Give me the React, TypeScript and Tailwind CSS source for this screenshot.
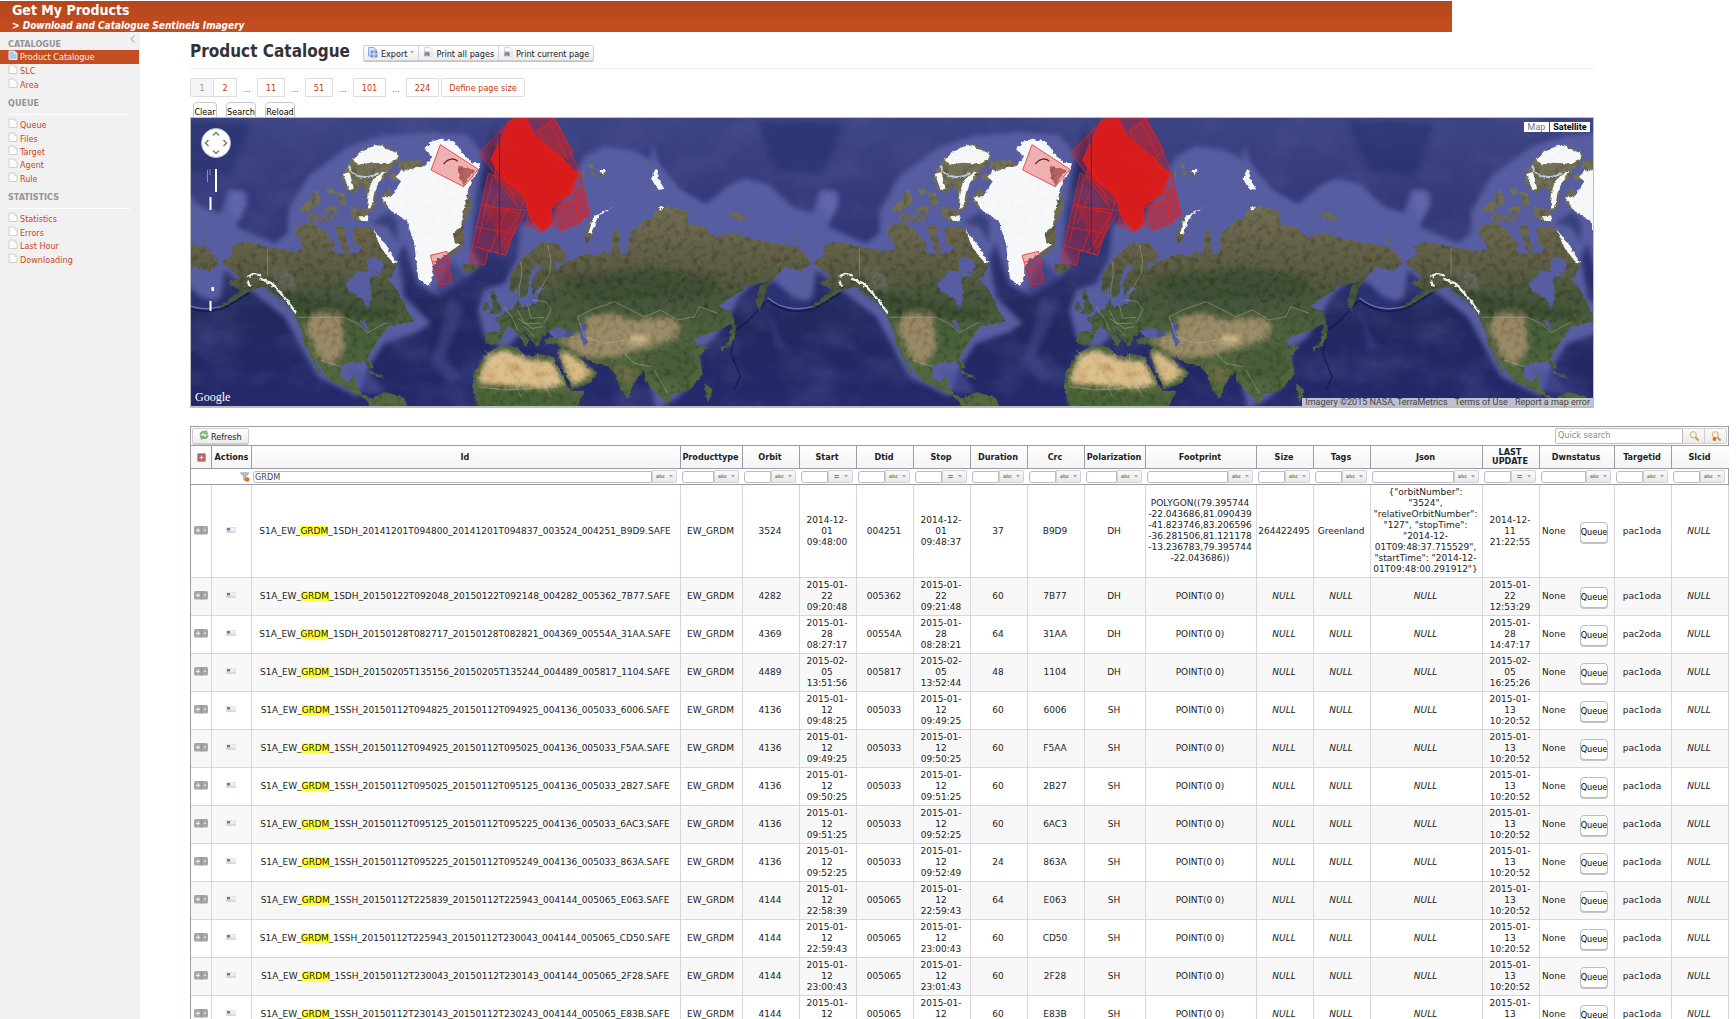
import type { ReactNode } from "react";

/* ---------- small icons ---------- */

function PageIcon({ active = false }: { active?: boolean }) {
  return (
    <svg viewBox="0 0 10 10" className="size-[10px] shrink-0" aria-hidden="true">
      <path
        d="M1 1h5.500L9 3.500V9.500H1z"
        fill={active ? "#a9c8f2" : "#fbfbfb"}
        stroke={active ? "#e4eefb" : "#cfcfcf"}
        strokeWidth="1"
      />
      <path d="M6.500 1v2.500H9" fill="none" stroke={active ? "#ffffff" : "#d8d8d8"} strokeWidth=".8" />
    </svg>
  );
}

function ExportIcon() {
  return (
    <svg viewBox="0 0 10 11" className="h-[11px] w-[10px]" aria-hidden="true">
      <path d="M.5.5h5.500L8 2.500V9H.5z" fill="#d6e4f8" stroke="#8fa9d6" />
      <path d="M3 4h6v6H3z" fill="#7d9fdd" stroke="#5f82c4" strokeWidth=".7" />
      <path d="M3 7h6M6 4v6" stroke="#e9f1fc" strokeWidth=".9" />
    </svg>
  );
}

function PrintIcon() {
  return (
    <svg viewBox="0 0 10 11" className="h-[11px] w-[10px]" aria-hidden="true">
      <path d="M1.500.5H7L9 2.500V9.500H1.500z" fill="#f7f7f7" stroke="#cfd3d8" strokeWidth=".8" />
      <rect x="1" y="4.500" width="6" height="4.500" fill="#aab3c0" />
      <path d="M2 8.500 3.500 5.500 5 8.500M5.500 5.500v3" stroke="#5d6878" strokeWidth=".8" fill="none" />
    </svg>
  );
}

function RefreshIcon() {
  return (
    <svg viewBox="0 0 10 10" className="size-[10px]" aria-hidden="true">
      <path d="M.8 4.300C1.400 1.600 4 .6 6.200 1.600L7.400.4 8.800 4.200 4.800 3.900 5.600 2.900C4.200 2.400 3 3 2.700 4.300z" fill="#8cc47f" stroke="#4c8f45" strokeWidth=".5" />
      <path d="M9.200 5.700C8.600 8.400 6 9.400 3.800 8.400L2.600 9.600 1.200 5.800 5.200 6.100 4.400 7.100C5.800 7.600 7 7 7.300 5.700z" fill="#7dbb72" stroke="#4c8f45" strokeWidth=".5" />
    </svg>
  );
}

function AddIcon() {
  return (
    <svg viewBox="0 0 9 9" className="mx-auto size-[9px]" aria-hidden="true">
      <rect x=".5" y=".5" width="8" height="8" rx="1" fill="#b0626a" stroke="#c9999d" />
      <path d="M4.500 2.500v4M2.500 4.500h4" stroke="#f0dcdd" strokeWidth="1.200" />
    </svg>
  );
}

function RowToggleIcon() {
  return (
    <svg viewBox="0 0 14 9" className="mx-auto h-[9px] w-[14px]" aria-hidden="true">
      <rect width="14" height="8.500" rx="1.500" fill="#a6a6a6" />
      <path d="M7.500 0v8.500" stroke="#8b8b8b" strokeWidth=".8" />
      <path d="M4 2.300v4M2 4.300h4" stroke="#e4eaed" strokeWidth="1.200" />
      <path d="M10 4.300h2" stroke="#e0e0e0" strokeWidth="1.400" />
    </svg>
  );
}

function CardIcon() {
  return (
    <svg viewBox="0 0 10 6" className="mx-auto h-[6px] w-[10px]" aria-hidden="true">
      <rect width="10" height="6" fill="#e2e4e8" />
      <rect x="1" y="1" width="3" height="2.500" fill="#6c7c9b" />
      <path d="M5 1.500h4M5 3h4" stroke="#f8f8fb" strokeWidth=".8" />
      <path d="M.5 5h9" stroke="#c5c8cf" strokeWidth=".8" />
    </svg>
  );
}

function FunnelIcon() {
  return (
    <svg viewBox="0 0 10 10" className="h-[10px] w-[10px]" aria-hidden="true">
      <path d="M.5.8h8.500L6 4.500V9L3.700 8V4.500z" fill="#bdbdbd" stroke="#8b8b8b" strokeWidth=".6" />
      <circle cx="7.300" cy="7.500" r="1.900" fill="#e2702f" stroke="#b54f1c" strokeWidth=".4" />
    </svg>
  );
}

function LensIcon({ reset = false }: { reset?: boolean }) {
  return (
    <svg viewBox="0 0 10 10" className="size-[10px]" aria-hidden="true">
      <path d="M6 6 9 9" stroke="#c99a4a" strokeWidth="1.800" strokeLinecap="round" />
      <circle cx="4.300" cy="3.800" r="3" fill="#f4f4f0" stroke="#d9b576" strokeWidth="1.100" />
      {reset && <circle cx="3.500" cy="8" r="1.900" fill="#dd6427" />}
    </svg>
  );
}

function Caret() {
  return (
    <svg viewBox="0 0 4 3" className="h-[3px] w-[4px]" aria-hidden="true">
      <path d="M0 0h4L2 2.500z" fill="#a5a5a5" />
    </svg>
  );
}

/* ---------- satellite map ---------- */

const PERIOD = 1775;
const COPIES = [-1, 0, 1, 2, 3];

const land = [
  "M130 472 108 458 150 432 138 412 178 392 250 410 330 424 400 402 470 432 522 428 540 400 562 440 520 482 485 520 490 540 536 566 550 602 562 560 556 500 600 498 640 540 668 600 690 635 655 640 610 650 582 690 562 722 550 745 568 774 556 778 540 756 500 756 470 770 468 800 490 816 512 794 514 825 530 850 562 866 600 846 660 862 672 900 560 900 548 870 500 842 430 806 396 750 368 700 342 642 330 612 290 562 240 530 190 545 130 585 90 600 128 572 170 540 130 520 165 500z",
  "M975 545 980 492 1005 455 1035 425 1072 396 1120 402 1150 440 1138 462 1110 452 1118 475 1140 460 1160 448 1210 430 1240 440 1255 425 1282 430 1286 372 1302 356 1308 430 1330 430 1335 372 1380 330 1400 330 1410 305 1450 288 1505 300 1512 342 1560 352 1600 384 1640 366 1700 385 1760 398 1845 412 1880 462 1850 482 1800 472 1760 512 1740 560 1725 604 1715 580 1725 530 1752 512 1690 530 1625 572 1605 592 1640 602 1645 640 1615 655 1590 665 1535 684 1535 702 1570 712 1545 742 1555 792 1515 840 1465 850 1452 880 1410 846 1385 812 1378 780 1345 826 1332 866 1310 840 1290 790 1270 768 1240 764 1200 740 1175 742 1110 700 1085 704 1080 690 1130 672 1095 665 1075 680 1060 710 1040 690 1020 662 1005 650 1035 690 1025 712 1000 672 980 652 960 660 948 695 925 706 903 700 905 665 945 665 950 645 930 630 970 605 990 592 1000 566 1012 592 1062 578 1060 548 1085 535 1062 530 1045 560 1042 520 1055 490 1072 470 1055 462 1035 500 1030 545 1020 562 1002 560 1000 530 988 545z",
  "M950 706 1000 712 1018 735 1045 742 1060 730 1110 742 1130 790 1162 842 1200 842 1172 900 886 900 864 836 868 790 900 735z",
  "M1120 722 1140 710 1180 735 1210 768 1242 790 1215 820 1164 838 1145 800z",
  "M330 352 372 338 410 352 450 400 442 428 380 434 350 400z",
  "M340 300 372 272 405 256 410 276 366 310z",
  "M425 236 445 230 450 250 432 256z M452 244 482 252 486 290 468 285z M420 292 460 288 455 312 424 306z M372 315 400 312 396 336 366 330z M402 320 450 314 446 330 404 332z M384 246 400 240 402 256 380 262z",
  "M478 182 500 150 540 118 590 102 642 128 644 148 618 178 596 214 578 220 568 300 546 302 550 250 530 226 510 250 488 238 472 212z",
  "M506 352 560 350 602 402 640 462 622 502 588 492 600 460 552 430 540 410 510 402z",
  "M452 350 480 345 488 400 500 450 476 420 462 380z M518 448 548 455 552 485 522 482z M560 480 620 498 610 505z M496 290 548 300 552 330 520 334 500 318z",
  "M645 152 700 150 724 170 690 182 640 176z M620 190 650 194 642 212 616 208z M592 262 612 232 622 250 640 298 604 292z M836 300 858 240 860 300 840 330 836 404 806 400 804 370z",
  "M918 545 932 540 935 565 952 596 945 610 914 612 925 590z M898 580 912 572 914 596 896 602z",
  "M834 462 868 460 882 474 854 492 838 482z",
  "M1645 610 1655 660 1650 680 1640 706 1612 722 1608 714 1635 695z M1540 784 1548 786 1545 812z M1560 820 1585 840 1570 880z",
  "M1205 400 1200 375 1225 320 1240 318 1215 400z M1626 312 1660 310 1690 326 1660 332z M1185 190 1200 186 1200 205 1184 204z M1210 166 1224 160 1228 176z M1236 192 1254 188 1250 204z M1216 186 1228 182 1230 200z",
  "M580 792 602 804 570 800z M550 782 588 795 560 792z",
  "M350 680 362 682 410 790 400 785z M1832 386 1850 388 1842 396z",
];

const ice = [
  "M652 182 722 168 744 140 720 118 738 96 770 86 812 96 835 130 862 158 888 160 880 185 862 206 852 240 840 290 830 350 806 372 812 400 834 408 800 428 760 448 745 470 744 502 732 528 702 506 690 402 668 332 620 302 592 262 620 262 650 214 634 200z",
  "M506 150 536 120 580 104 638 130 640 146 612 162 560 158 520 164z",
  "M476 192 496 186 508 236 494 240z M580 196 604 182 570 246 562 294 548 296 556 230 566 210z M522 320 552 316 550 334 530 332z",
  "M566 358 600 398 638 460 622 454 590 414z",
  "M1410 182 1420 180 1424 210 1440 236 1420 240 1402 208z M1285 290 1245 318 1222 372 1212 372 1226 322z M1245 180 1268 180 1256 192z M1422 292 1440 290 1430 304z",
];

const borders =
  "M250 414V500M340 622H480L520 640 550 668 610 636M1008 455C1020 500 1000 520 1005 560M1090 405 1100 450 1096 490 1060 552M1045 570 1085 575 1100 600 1080 640M1000 600 1020 640 1070 640M1180 620 1220 600 1290 575 1340 600 1380 620 1430 600 1480 630 1530 620 1545 590 1600 610M1180 620 1200 680 1260 700 1320 690M1300 710 1350 760 1400 770M900 720 980 800 1010 860M1060 735 1065 800 1100 860M880 830 960 840 1120 830M1020 650 1050 680M960 590 985 625 1000 660M1030 585 1040 625 1080 622M1000 625 1045 655 1075 650M1410 780 1450 850M410 750 470 770";

function Footprints() {
  return (
    <g stroke="#e8231d" strokeWidth="3" fill="#e01b18" fillOpacity=".32" strokeOpacity=".75">
      <path d="M768 104 882 178 838 230 740 180z" />
      <path d="M738 436 788 424 802 518 764 526z M744 456 794 452M754 484 798 478" />
      <path d="M912 190 1030 240 965 436 912 420 902 466 854 454z" />
      <path d="M894 282 1005 312M872 350 985 370M864 408 962 434M940 250 905 340M970 290 915 430M1000 320 935 430M925 200 880 400" fill="none" />
      <path d="M885 128 985 24H1065L1110 24 1160 128 1188 190 1216 316 1125 362 1110 340 1076 365 1026 346 1032 300 930 190z" />
      <path d="M1060 60 1110 24 1166 128 1100 160zM1120 290 1180 270 1190 340 1128 360zM1170 244 1194 238 1216 316 1180 330z" />
      <path d="M1030 90 1098 40 1150 150M1100 180 1190 190M1080 300 1180 270M1100 230 1190 240" fill="none" />
      <path d="M975 32 1025 24 1056 80 1130 140 1180 192 1160 250 1100 290 1104 340 1076 362 1040 330 1020 262 950 200 920 150z" fillOpacity=".93" />
      <path d="M940 150 1000 290 930 200zM900 290 1030 300 960 420" />
    </g>
  );
}

function SeaFloor() {
  return (
    <>
      <g filter="url(#soft)">
        <path
          fill="#565da1"
          d="M-370 100-350 170-290 240-210 282-140 225-90 205-20 225 50 290 110 310 130 240 175 240 190 280 155 350 270 400 310 370 312 300 370 200 490 110 590 78 730 66 850 74 895 130 870 300 862 420 890 460 850 500 760 560 700 520 660 400 640 440 660 560 740 640 700 665 600 700 560 760 520 860 400 800 300 620 120 480 110 560 60 590 0 520-50 505-110 560-130 600-180 680-230 720-230 780-290 860-360 900-420 600z"
        />
        <path
          fill="#565da1"
          d="M1010 340 1100 330 1200 140 1260 108 1350 122 1420 160 1480 240 1600 320 1640 500 1500 500 1100 560 1060 620 960 720 900 680 880 600 900 540 960 520 1000 440z"
        />
        <path fill="#656bad" fillOpacity=".6" d="M140 240 190 250 180 300 160 335 138 300z" />
        <path fill="#2b3070" d="M650 380 690 560 790 560 850 500 800 450 740 560 700 520z" fillOpacity=".5" />
        <path fill="#262b66" d="M640 330 612 305 560 340 610 350 640 400z" fillOpacity=".6" />
        <path fill="#4a5095" d="M800 560 840 600 780 740 830 800 800 820 740 760z" fillOpacity=".45" />
        <path fill="#20245c" d="M930 40 900 180 880 260 940 180z" fillOpacity=".7" />
        <path fill="#262b66" d="M-60 30 0 180 140 200 200 40z" fillOpacity=".5" />
        <path fill="#2b3074" d="M-50 510 0 515 50 560 100 575 90 600 30 605-20 590z" />
        <path fill="#3a418c" d="M-30 580 10 680 30 710 100 720 0 715z" fillOpacity=".6" />
        <path fill="#4c529a" d="M480 770 560 790 600 850 540 850z" fillOpacity=".6" />
      </g>
      <path d="M-25 570C10 600 60 612 110 596C140 585 170 560 195 548" fill="none" stroke="#10173f" strokeWidth="7" strokeOpacity=".7" />
      <path d="M-25 563C10 593 60 605 110 589C140 578 170 553 195 541" fill="none" stroke="#6a70aa" strokeWidth="4" />
      <path d="M-27 572-85 634-125 664-135 730-107 800-125 840" fill="none" stroke="#11163f" strokeWidth="5" strokeOpacity=".6" />
    </>
  );
}

function LandMasses() {
  return (
    <>
      <g filter="url(#coast)">
        {land.map((d) => (
          <path key={d} d={d} fill="url(#land)" />
        ))}
        <g filter="url(#soft)">
          <path fill="#a18e6b" fillOpacity=".9" d="M360 645 400 600 470 600 480 720 440 770 400 740z" />
          <path fill="#436239" fillOpacity=".7" d="M490 650 590 645 540 735 490 745z" />
          <path fill="#a3926f" d="M1120 690 1210 660 1200 620 1290 610 1340 630 1440 620 1490 640 1480 680 1400 710 1290 740 1200 740z" fillOpacity=".9" />
          <path fill="#4b5b38" d="M1400 740 1520 700 1540 770 1500 820 1400 800z" fillOpacity=".8" />
          <path fill="#77714a" d="M1285 765 1360 775 1335 835z" fillOpacity=".7" />
          <path fill="#34452d" d="M1120 500 1400 470 1600 500 1580 560 1200 570z" fillOpacity=".5" />
          <path fill="#34432c" d="M230 530 420 570 640 600 600 630 350 612z" fillOpacity=".5" />
          <path fill="#6c6c60" d="M260 470 320 480 340 530 300 540z" fillOpacity=".8" />
          <path fill="#dcc08e" d="M885 795 910 738 960 720 1040 750 1105 755 1140 825 1080 835 885 820z" />
          <path fill="#d9bb88" d="M1125 728 1150 726 1200 765 1225 790 1170 826 1150 795z" />
          <path fill="#b88c58" d="M960 770 1010 760 1000 790zM1040 790 1080 780 1070 810zM900 790 930 785 920 810z" fillOpacity=".7" />
          <path fill="#4a6339" d="M875 850 1140 846 1180 862 1165 895 885 895z" />
          <path fill="#d5c190" d="M1320 696 1350 676 1400 680 1370 700z" />
        </g>
        <path fill="#565da1" d="M1090 668 1115 652 1135 656 1170 668 1165 680 1110 682zM1186 640 1208 642 1200 670 1212 698 1198 706 1186 670zM520 626 548 640 552 668 540 650z" />
        <path fill="#2b3170" d="M1112 752 1120 756 1162 830 1156 834z" />
        {ice.map((d) => (
          <path key={d} d={d} fill="#f6f8f9" />
        ))}
        <path d="M494 166C500 200 540 212 580 190" fill="none" stroke="#b9cfdc" strokeWidth="6" />
        <path d="M188 500 206 492 232 496M226 506 262 520 290 550 336 610M190 512 196 530" fill="none" stroke="#eef1f2" strokeWidth="7" />
      </g>
      <path d="M778 162C792 143 812 144 820 154" fill="none" stroke="#3a2433" strokeWidth="4" />
      <path d="M818 168 850 172 872 182 850 206 838 226 826 200z" fill="#6b3b34" fillOpacity=".6" filter="url(#coast)" />
      <path d="M790 430 830 402 834 410 796 445z" fill="#6d5f52" />
      <path d={borders} fill="none" stroke="#c9cbb8" strokeWidth="2" strokeOpacity=".55" />
      <Footprints />
    </>
  );
}

function SatelliteMap() {
  return (
    <svg className="block h-[288px] w-full" role="img" aria-label="Satellite world map with product footprints">
      <defs>
        <linearGradient id="sea" x1="0" y1="0" x2="0" y2="1">
          <stop offset="0" stopColor="#3d4485" />
          <stop offset=".2" stopColor="#363c7d" />
          <stop offset=".45" stopColor="#2f3575" />
          <stop offset=".68" stopColor="#22285f" />
          <stop offset="1" stopColor="#23296a" />
        </linearGradient>
        <linearGradient id="land" gradientUnits="userSpaceOnUse" x1="0" y1="250" x2="0" y2="880">
          <stop offset="0" stopColor="#757158" />
          <stop offset=".3" stopColor="#625f47" />
          <stop offset=".5" stopColor="#48563b" />
          <stop offset=".7" stopColor="#50643f" />
          <stop offset="1" stopColor="#54683f" />
        </linearGradient>
        <filter id="soft" x="-10%" y="-10%" width="120%" height="120%">
          <feGaussianBlur stdDeviation="8" />
        </filter>
        <filter id="coast" x="-2%" y="-2%" width="104%" height="104%">
          <feTurbulence type="fractalNoise" baseFrequency=".09" numOctaves="3" seed="4" result="n" />
          <feDisplacementMap in="SourceGraphic" in2="n" scale="11" xChannelSelector="R" yChannelSelector="G" result="shape" />
          <feTurbulence type="fractalNoise" baseFrequency=".05" numOctaves="4" seed="9" result="m" />
          <feColorMatrix in="m" type="matrix" values="0 0 0 0 .12  0 0 0 0 .13  0 0 0 0 .06  1.600 0 0 0 -.72" result="dark" />
          <feComposite in="dark" in2="shape" operator="in" result="shade" />
          <feBlend in="shade" in2="shape" mode="soft-light" />
        </filter>
        <filter id="relief" x="0" y="0" width="100%" height="100%">
          <feTurbulence type="fractalNoise" baseFrequency=".02 .03" numOctaves="4" seed="3" />
          <feColorMatrix type="matrix" values="0 0 0 0 .08  0 0 0 0 .09  0 0 0 0 .28  1.600 0 0 0 -.68" />
        </filter>
        <g id="seafloor">
          <SeaFloor />
        </g>
        <g id="landmasses">
          <LandMasses />
        </g>
      </defs>
      <rect width="100%" height="100%" fill="url(#sea)" />
      <rect width="100%" height="100%" filter="url(#relief)" opacity=".6" />
      <g transform="scale(.33333) translate(-20 -24)">
        {COPIES.map((n) => (
          <use key={n} href="#seafloor" x={n * PERIOD} />
        ))}
        {COPIES.map((n) => (
          <use key={n} href="#landmasses" x={n * PERIOD} />
        ))}
        <path d="M946 70V430M2721 70V430" stroke="#3a2a66" strokeWidth="3" />
      </g>
      <g>
        <circle cx="25" cy="25" r="14.500" fill="#fff" stroke="#b9bdd0" />
        <path d="M22 17.500 25 14.500 28 17.500M22 32.500 25 35.500 28 32.500M17.500 22 14.500 25 17.500 28M32.500 22 35.500 25 32.500 28" fill="none" stroke="#7b7b7b" strokeWidth="1.500" />
        <path d="M24 51h2v23h-2zM18.500 79h2v13h-2zM20.500 169h2.500v4h-2.500zM18.500 183h2v10h-2z" fill="#fff" />
        <path d="M16.500 52v12M19 51v6" stroke="#fff" strokeOpacity=".45" />
      </g>
    </svg>
  );
}

/* ---------- data ---------- */

const NAV: { title: string; items: string[]; grid: string; rule: boolean }[] = [
  { title: "CATALOGUE", items: ["Product Catalogue", "SLC", "Area"], grid: "h-[41px]", rule: false },
  { title: "QUEUE", items: ["Queue", "Files", "Target", "Agent", "Rule"], grid: "h-[67px]", rule: true },
  { title: "STATISTICS", items: ["Statistics", "Errors", "Last Hour", "Downloading"], grid: "h-[54px]", rule: true },
];

const COLUMNS: [string, string, "abc" | "="][] = [
  ["Id", "w-[429px]", "abc"],
  ["Producttype", "w-[62px]", "abc"],
  ["Orbit", "w-[57px]", "abc"],
  ["Start", "w-[57px]", "="],
  ["Dtid", "w-[57px]", "abc"],
  ["Stop", "w-[57px]", "="],
  ["Duration", "w-[57px]", "abc"],
  ["Crc", "w-[57px]", "abc"],
  ["Polarization", "w-[61px]", "abc"],
  ["Footprint", "w-[111px]", "abc"],
  ["Size", "w-[57px]", "abc"],
  ["Tags", "w-[57px]", "abc"],
  ["Json", "w-[112px]", "abc"],
  ["LAST UPDATE", "w-[57px]", "="],
  ["Dwnstatus", "w-[75px]", "abc"],
  ["Targetid", "w-[57px]", "abc"],
  ["Slcid", "w-[57px]", "abc"],
];

type Row = {
  mode: string;
  day: string;
  from: string;
  to: string;
  orbit: string;
  dtid: string;
  crc: string;
  duration: string;
  updated: string;
  at: string;
  target?: string;
  footprint?: string[];
  size?: string;
  tags?: string;
  json?: string[];
};

const ROWS: Row[] = [
  {
    mode: "1SDH", day: "2014-12-01", from: "09:48:00", to: "09:48:37", orbit: "3524", dtid: "004251", crc: "B9D9", duration: "37",
    updated: "2014-12-11", at: "21:22:55", size: "264422495", tags: "Greenland",
    footprint: ["POLYGON((79.395744", "-22.043686,81.090439", "-41.823746,83.206596", "-36.281506,81.121178", "-13.236783,79.395744", "-22.043686))"],
    json: ['{"orbitNumber":', '"3524",', '"relativeOrbitNumber":', '"127", "stopTime":', '"2014-12-', '01T09:48:37.715529",', '"startTime": "2014-12-', '01T09:48:00.291912"}'],
  },
  { mode: "1SDH", day: "2015-01-22", from: "09:20:48", to: "09:21:48", orbit: "4282", dtid: "005362", crc: "7B77", duration: "60", updated: "2015-01-22", at: "12:53:29" },
  { mode: "1SDH", day: "2015-01-28", from: "08:27:17", to: "08:28:21", orbit: "4369", dtid: "00554A", crc: "31AA", duration: "64", updated: "2015-01-28", at: "14:47:17", target: "pac2oda" },
  { mode: "1SDH", day: "2015-02-05", from: "13:51:56", to: "13:52:44", orbit: "4489", dtid: "005817", crc: "1104", duration: "48", updated: "2015-02-05", at: "16:25:26" },
  { mode: "1SSH", day: "2015-01-12", from: "09:48:25", to: "09:49:25", orbit: "4136", dtid: "005033", crc: "6006", duration: "60", updated: "2015-01-13", at: "10:20:52" },
  { mode: "1SSH", day: "2015-01-12", from: "09:49:25", to: "09:50:25", orbit: "4136", dtid: "005033", crc: "F5AA", duration: "60", updated: "2015-01-13", at: "10:20:52" },
  { mode: "1SSH", day: "2015-01-12", from: "09:50:25", to: "09:51:25", orbit: "4136", dtid: "005033", crc: "2B27", duration: "60", updated: "2015-01-13", at: "10:20:52" },
  { mode: "1SSH", day: "2015-01-12", from: "09:51:25", to: "09:52:25", orbit: "4136", dtid: "005033", crc: "6AC3", duration: "60", updated: "2015-01-13", at: "10:20:52" },
  { mode: "1SSH", day: "2015-01-12", from: "09:52:25", to: "09:52:49", orbit: "4136", dtid: "005033", crc: "863A", duration: "24", updated: "2015-01-13", at: "10:20:52" },
  { mode: "1SSH", day: "2015-01-12", from: "22:58:39", to: "22:59:43", orbit: "4144", dtid: "005065", crc: "E063", duration: "64", updated: "2015-01-13", at: "10:20:52" },
  { mode: "1SSH", day: "2015-01-12", from: "22:59:43", to: "23:00:43", orbit: "4144", dtid: "005065", crc: "CD50", duration: "60", updated: "2015-01-13", at: "10:20:52" },
  { mode: "1SSH", day: "2015-01-12", from: "23:00:43", to: "23:01:43", orbit: "4144", dtid: "005065", crc: "2F28", duration: "60", updated: "2015-01-13", at: "10:20:52" },
  { mode: "1SSH", day: "2015-01-12", from: "23:01:43", to: "23:02:43", orbit: "4144", dtid: "005065", crc: "E83B", duration: "60", updated: "2015-01-13", at: "10:20:52" },
];

/* ---------- table pieces ---------- */

function Lines({ of }: { of: string[] }) {
  return (
    <>
      {of.map((line, i) => (
        <span key={i} className="block">
          {line}
        </span>
      ))}
    </>
  );
}

function Cell({ children }: { children: ReactNode }) {
  return <td className="border-r border-b border-[#d6d6dc] py-[2px] pr-[2px] pl-0 whitespace-nowrap">{children}</td>;
}

const Null = () => <i>NULL</i>;

const stamp = (day: string, time: string) => [day.slice(0, 8), day.slice(8), time];

function ProductRow({ row }: { row: Row }) {
  const compact = row.day.replaceAll("-", "");
  const t = (v: string) => `${compact}T${v.replaceAll(":", "")}`;
  return (
    <tr className="h-[38px] even:bg-[#f8f8f8]">
      <Cell>
        <button type="button" aria-label="Toggle row" className="block w-full pb-[2px] pl-[2px]">
          <RowToggleIcon />
        </button>
      </Cell>
      <Cell>
        <button type="button" aria-label="View record" className="block w-full pb-[3px]">
          <CardIcon />
        </button>
      </Cell>
      <Cell>
        S1A_EW_<mark className="bg-[#ffff33] text-inherit">GRDM</mark>
        {`_${row.mode}_${t(row.from)}_${t(row.to)}_00${row.orbit}_${row.dtid}_${row.crc}.SAFE`}
      </Cell>
      <Cell>EW_GRDM</Cell>
      <Cell>{row.orbit}</Cell>
      <Cell><Lines of={stamp(row.day, row.from)} /></Cell>
      <Cell>{row.dtid}</Cell>
      <Cell><Lines of={stamp(row.day, row.to)} /></Cell>
      <Cell>{row.duration}</Cell>
      <Cell>{row.crc}</Cell>
      <Cell>{row.mode.slice(2)}</Cell>
      <Cell>{row.footprint ? <Lines of={row.footprint} /> : "POINT(0 0)"}</Cell>
      <Cell>{row.size ?? <Null />}</Cell>
      <Cell>{row.tags ?? <Null />}</Cell>
      <Cell>{row.json ? <Lines of={row.json} /> : <Null />}</Cell>
      <Cell><Lines of={stamp(row.updated, row.at)} /></Cell>
      <Cell>
        <div className="flex items-center justify-between pr-[4px] pl-[2px]">
          None
          <button
            type="button"
            className="mt-[2px] h-[21px] w-[28px] rounded-[4px] border border-[#bdbdbd] bg-white text-center font-['DejaVu_Sans_Condensed','DejaVu_Sans',sans-serif] text-[9px] text-black shadow-[0_1px_0_#c4c4c4]"
          >
            <span className="-mx-1 block">Queue</span>
          </button>
        </div>
      </Cell>
      <Cell>{row.target ?? "pac1oda"}</Cell>
      <Cell><Null /></Cell>
    </tr>
  );
}

function FilterCell({ name, op }: { name: string; op: "abc" | "=" }) {
  return (
    <td className="border-b border-[#9b9ba9] p-0">
      <div className="flex h-[13px] items-center pr-[4px] pl-px">
        <input
          aria-label={`Filter ${name}`}
          defaultValue={name === "Id" ? "GRDM" : ""}
          className="h-[12px] w-0 min-w-0 flex-1 rounded-l-[3px] border border-[#bcbcbc] bg-white px-px text-[9px] leading-[10px] text-[#444] outline-none"
        />
        <button
          type="button"
          aria-label={`Filter mode for ${name}`}
          className="flex h-[13px] w-[25px] shrink-0 items-center justify-center gap-[4px] rounded-r-[2px] border border-[#d2d2d2] bg-linear-to-b from-[#fafafa] to-[#e8e8e8]"
        >
          {op === "abc" ? (
            <span className="text-[5px] leading-none font-bold text-[#777]">
              a<span className="text-[#6fa03c]">b</span>c
            </span>
          ) : (
            <span className="text-[8px] leading-none font-bold text-[#777]">=</span>
          )}
          <Caret />
        </button>
      </div>
    </td>
  );
}

function ProductTable() {
  return (
    <section className="max-w-[1539px] border border-b-0 border-[#9b9ba9]">
      <div className="flex h-[19px] items-center justify-between border-b border-[#9b9ba9] px-px">
        <button
          type="button"
          className="flex h-[16px] items-center gap-[2px] rounded-[2px] border border-[#cbcbcb] bg-linear-to-b from-white to-[#ececec] px-[6px] text-[9px] shadow-[0_1px_0_#c9c9c9]"
        >
          <span className="pb-[2px]"><RefreshIcon /></span>
          <span className="pt-[3px]">Refresh</span>
        </button>
        <form className="flex h-[16px]" onSubmit={(e) => e.preventDefault()}>
          <input
            type="search"
            aria-label="Quick search"
            placeholder="Quick search"
            className="w-[128px] rounded-l-[2px] border border-[#bcbcbc] bg-white px-[2px] text-[9px] outline-none placeholder:text-[#8a8a8a]"
          />
          <button type="submit" aria-label="Search" className="grid w-[22px] place-items-center border border-l-0 border-[#cfcfcf] bg-linear-to-b from-[#fafafa] to-[#ebebeb]">
            <LensIcon />
          </button>
          <button type="reset" aria-label="Reset search" className="grid w-[22px] place-items-center rounded-r-[2px] border border-l-0 border-[#cfcfcf] bg-linear-to-b from-[#fafafa] to-[#ebebeb]">
            <LensIcon reset />
          </button>
        </form>
      </div>
      <table className="w-full table-fixed border-separate border-spacing-0 text-center font-['DejaVu_Sans',sans-serif] text-[9px] leading-[11px] text-[#222]">
        <colgroup>
          <col className="w-[21px]" />
          <col className="w-[40px]" />
          {COLUMNS.map(([name, width]) => (
            <col key={name} className={width} />
          ))}
        </colgroup>
        <thead className="font-['DejaVu_Sans_Condensed','DejaVu_Sans',sans-serif]">
          <tr className="h-[23px] bg-linear-to-b from-[#fefefe] to-[#f4f4f4] leading-[9px]">
            <th className="border-r border-b border-[#9b9ba9] p-0"><AddIcon /></th>
            <th className="border-r border-b border-[#9b9ba9] p-0">Actions</th>
            {COLUMNS.map(([name]) => (
              <th key={name} className="border-r border-b border-[#9b9ba9] py-0 pr-[2px] pl-0 last:border-r-0">{name}</th>
            ))}
          </tr>
          <tr className="h-[16px]">
            <td colSpan={2} className="border-b border-[#9b9ba9] p-0">
              <button type="button" aria-label="Clear filters" className="ml-auto block pr-[2px]">
                <FunnelIcon />
              </button>
            </td>
            {COLUMNS.map(([name, , op]) => (
              <FilterCell key={name} name={name} op={op} />
            ))}
          </tr>
        </thead>
        <tbody>
          {ROWS.map((row) => (
            <ProductRow key={row.crc} row={row} />
          ))}
        </tbody>
      </table>
    </section>
  );
}

/* ---------- page ---------- */

function Sidebar() {
  return (
    <nav className="relative w-[140px] shrink-0 bg-[#f1f1f1] text-[9px]">
      <button type="button" aria-label="Collapse sidebar" className="absolute top-[3px] right-[5px]">
        <svg viewBox="0 0 5 8" className="h-[8px] w-[5px]"><path d="M4.500.5 1 4 4.500 7.500" fill="none" stroke="#c2c2c2" strokeWidth="1.400" /></svg>
      </button>
      {NAV.map(({ title, items, grid, rule }) => (
        <div key={title}>
          <h2 className={rule ? "mr-[10px] ml-[8px] mb-[3px] border-b border-white pt-[7px] pb-[5px] leading-[11px] font-bold text-[#949494]" : "ml-[8px] pt-[6px] leading-[12px] font-bold text-[#949494]"}>
            {title}
          </h2>
          <ul className={`grid auto-rows-fr ${grid}`}>
            {items.map((item, i) => {
              const active = i === 0 && !rule;
              return (
                <li key={item} className={active ? "mr-px bg-[#c44e22]" : ""}>
                  <a href="#" className={`flex h-full items-center gap-[2px] pl-[8px] ${active ? "text-[#fbe9e2]" : "text-[#c4481c]"}`}>
                    <span className="pb-[3px]"><PageIcon active={active} /></span>
                    <span className="pt-[2px] leading-[11px]">{item}</span>
                  </a>
                </li>
              );
            })}
          </ul>
        </div>
      ))}
    </nav>
  );
}

const PAGES: [string, string][] = [
  ["2", "w-[23px]"],
  ["11", "w-[28px]"],
  ["51", "w-[28px]"],
  ["101", "w-[33px]"],
  ["224", "w-[33px]"],
];

const toolButton = "flex h-full items-center gap-[3px] border-r border-[#d4d4d4] px-[4px] last:border-r-0";

export default function App() {
  return (
    <div className="flex h-screen flex-col overflow-hidden bg-white pt-px font-['DejaVu_Sans_Condensed','DejaVu_Sans',sans-serif] text-[#222]">
      <header className="h-[31px] w-full max-w-[1452px] shrink-0 bg-linear-to-b from-[#b5461c] to-[#c54e20] pl-[12px] text-white">
        <p className="pt-px text-[14px] leading-[17px] font-bold">Get My Products</p>
        <p className="text-[10px] leading-[14px] font-bold italic">&gt; Download and Catalogue Sentinels Imagery</p>
      </header>
      <div className="flex min-h-0 flex-1">
        <Sidebar />
        <main className="min-w-0 flex-1 pr-[7px] pl-[50px]">
          <div className="max-w-[1404px]">
            <div className="flex h-[37px] items-center border-b border-[#eee] pt-[2px]">
              <h1 className="text-[17px] leading-[20px] font-bold text-[#333]">Product Catalogue</h1>
              <div className="ml-[13px] mt-[3px] flex h-[16px] rounded-[2px] border border-[#cfcfcf] bg-linear-to-b from-white to-[#ececec] text-[9px] shadow-[0_1px_0_#c4c4c4]">
                <button type="button" className={toolButton}>
                  <ExportIcon />
                  <span className="pt-[4px]">Export</span>
                  <Caret />
                </button>
                <button type="button" className={toolButton}>
                  <PrintIcon />
                  <span className="pt-[4px]">Print all pages</span>
                </button>
                <button type="button" className={toolButton}>
                  <PrintIcon />
                  <span className="pt-[4px]">Print current page</span>
                </button>
              </div>
            </div>
            <div className="mt-[9px] flex h-[19px] items-stretch text-center text-[9px] leading-[18px] text-[#c03c10]">
              <span className="w-[24px] rounded-l-[2px] border border-[#dcdcdc] bg-[#f5f5f5] text-[#999]">1</span>
              {PAGES.map(([page, width], i) => (
                <span key={page} className="flex">
                  {i > 0 && <span className="w-[20px] pt-[2px]">...</span>}
                  <a href="#" className={`border border-[#dcdcdc] ${i === 0 ? "border-l-0" : ""} ${width}`}>{page}</a>
                </span>
              ))}
              <button type="button" className="ml-[2px] w-[84px] rounded-r-[2px] border border-[#dcdcdc]">Define page size</button>
            </div>
            <div className="mt-[5px] flex h-[15px] gap-[9px] overflow-hidden pl-[3px] text-[9px] text-black">
              {[["Clear", "w-[24px]"], ["Search", "w-[30px]"], ["Reload", "w-[30px]"]].map(([label, width]) => (
                <button key={label} type="button" className={`h-[21px] rounded-[4px] border border-[#c6c6c6] bg-white ${width}`}>
                  <span className="-mx-1 block">{label}</span>
                </button>
              ))}
            </div>
            <div className="relative border border-b-2 border-[#bdbdbd]">
              <SatelliteMap />
              <div className="absolute top-[4px] right-[3px] flex gap-px font-['Roboto',sans-serif] text-[9px] leading-[10px]">
                <button type="button" className="w-[25px] bg-white text-[#777]">Map</button>
                <button type="button" className="w-[40px] bg-white font-bold text-black">Satellite</button>
              </div>
              <span className="absolute bottom-px left-[4px] font-['Liberation_Serif',serif] text-[12px] leading-[15px] text-white">Google</span>
              <div className="absolute right-0 bottom-0 flex gap-[7px] bg-white/70 px-[3px] font-['Roboto',sans-serif] text-[9px] leading-[8px] text-[#444]">
                <span>Imagery ©2015 NASA, TerraMetrics</span>
                <a href="#">Terms of Use</a>
                <a href="#">Report a map error</a>
              </div>
            </div>
          </div>
          <div className="mt-[18px]">
            <ProductTable />
          </div>
        </main>
      </div>
    </div>
  );
}
